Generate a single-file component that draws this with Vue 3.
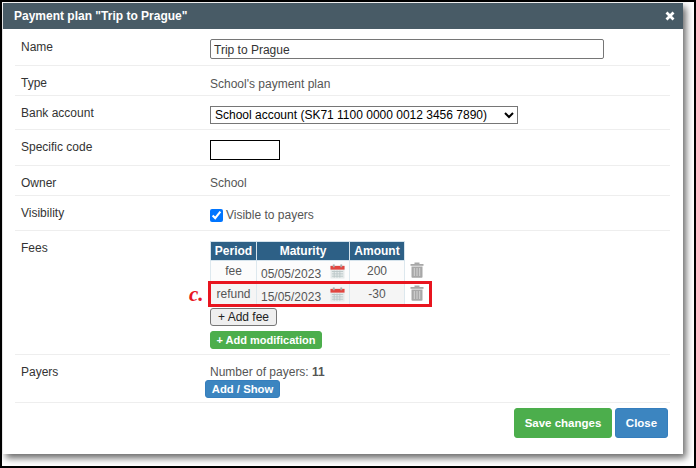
<script setup>
const fees = [
  { period: 'fee', date: '05/05/2023', amount: '200' },
  { period: 'refund', date: '15/05/2023', amount: '-30' }
]
</script>

<template>
  <div class="page">
    <div class="modal">
      <div class="head">
        <span>Payment plan "Trip to Prague"</span>
        <svg class="x" viewBox="0 0 10 10" width="10" height="10"><path d="M1.5 1.5l7 7M8.5 1.5l-7 7" stroke="#fff" stroke-width="2.8" /></svg>
      </div>
      <div class="body">
        <div class="row r1">
          <div class="lab">Name</div>
          <div class="val"><input class="name" value="Trip to Prague" /></div>
        </div>
        <div class="row r2">
          <div class="lab">Type</div>
          <div class="val">School's payment plan</div>
        </div>
        <div class="row r3">
          <div class="lab">Bank account</div>
          <div class="val">
            <select class="bank"><option>School account (SK71 1100 0000 0012 3456 7890)</option></select>
          </div>
        </div>
        <div class="row r4">
          <div class="lab">Specific code</div>
          <div class="val"><div class="code"></div></div>
        </div>
        <div class="row r5">
          <div class="lab">Owner</div>
          <div class="val">School</div>
        </div>
        <div class="row r6">
          <div class="lab">Visibility</div>
          <div class="val chk"><input type="checkbox" checked /><span>Visible to payers</span></div>
        </div>
        <div class="row r7">
          <div class="lab">Fees</div>
          <div class="val">
            <div class="fee-wrap">
              <table class="fees">
                <thead>
                  <tr><th class="c1">Period</th><th class="c2">Maturity</th><th class="c3">Amount</th></tr>
                </thead>
                <tbody>
                  <tr v-for="f in fees" :key="f.date">
                    <td class="c1"><span class="up">{{ f.period }}</span></td>
                    <td class="c2">
                      <div class="dt">
                        <span class="date">{{ f.date }}</span>
                        <svg class="cal" viewBox="0 0 16 16" width="15" height="15">
                          <rect x="0.5" y="2" width="15" height="13.5" fill="#e6ebeb" />
                          <rect x="0.5" y="2" width="15" height="4" fill="#e2453f" />
                          <rect x="3" y="0.5" width="2" height="3" fill="#aaa" />
                          <rect x="11" y="0.5" width="2" height="3" fill="#aaa" />
                          <path d="M2 8h12M2 10.5h12M2 13h12M4.5 7v7.5M7.5 7v7.5M10.5 7v7.5" stroke="#bcc7c9" stroke-width="1" />
                        </svg>
                      </div>
                    </td>
                    <td class="c3"><span class="up">{{ f.amount }}</span></td>
                    <td class="trash">
                      <svg viewBox="0 0 14 16" width="14" height="16">
                        <rect x="0.5" y="2" width="13" height="1.8" fill="#a8a8a8" />
                        <rect x="4.5" y="0.5" width="5" height="2" fill="#a8a8a8" />
                        <path d="M1.5 4.5h11V15a.8.8 0 0 1-.8.8H2.3a.8.8 0 0 1-.8-.8z" fill="#a8a8a8" />
                        <path d="M4.3 6v8M7 6v8M9.7 6v8" stroke="#d4d4d4" stroke-width="1" />
                      </svg>
                    </td>
                  </tr>
                </tbody>
              </table>
              <div class="mark"></div>
              <span class="c-label">c.</span>
            </div>
            <button class="btn-fee">+ Add fee</button>
            <button class="btn-mod">+ Add modification</button>
          </div>
        </div>
        <div class="row r8">
          <div class="lab">Payers</div>
          <div class="val">
            <div class="count">Number of payers: <b>11</b></div>
            <button class="btn-add">Add / Show</button>
          </div>
        </div>
        <div class="foot">
          <button class="btn-save">Save changes</button>
          <button class="btn-close">Close</button>
        </div>
      </div>
    </div>
  </div>
</template>

<style>
html, body { margin: 0; background: #fff; }
</style>

<style scoped>
.page {
  box-sizing: border-box;
  width: 696px;
  height: 468px;
  border: 2px solid #000;
  padding: 1px 0 0 1px;
  background: #fff;
  font-family: "Liberation Sans", Arial, sans-serif;
  font-size: 12px;
  color: #555;
  overflow: hidden;
}
.modal {
  width: 680px;
  height: 451px;
  background: #fff;
  box-shadow: 3px 4px 7px rgba(0, 0, 0, 0.6);
}
.head {
  height: 26px;
  background: #485b66;
  color: #fff;
  font-weight: bold;
  display: flex;
  align-items: center;
  justify-content: space-between;
  padding: 0 8px 0 11px;
}
.body { padding: 0 13px 0 12px; }
.row {
  display: flex;
  border-bottom: 1px solid #eee;
  box-sizing: border-box;
}
.lab { width: 195px; padding-left: 6px; box-sizing: border-box; color: #333; position: relative; top: -1px; }
.r3 .lab, .r4 .lab, .r5 .lab, .r7 .lab, .r8 .lab { top: 0; }
.val { flex: 1; }
.r1 { height: 37px; padding-top: 12px; }
.r2 { height: 30px; padding-top: 11px; }
.r3 { height: 34px; padding-top: 10px; }
.r4 { height: 36px; padding-top: 10px; }
.r5 { height: 30px; padding-top: 10px; }
.r6 { height: 35px; padding-top: 11px; }
.r7 { height: 124px; padding-top: 10px; }
.r8 { height: 48px; padding-top: 10px; }
.name {
  width: 394px;
  height: 20px;
  box-sizing: border-box;
  border: 1px solid #767676;
  border-radius: 2px;
  padding: 2px 3px 0;
  font: 12px "Liberation Sans", Arial, sans-serif;
  color: #333;
  display: block;
  margin-top: -2px;
}
.bank {
  width: 308px;
  height: 18px;
  box-sizing: border-box;
  font: 12px "Liberation Sans", Arial, sans-serif;
  color: #000;
  background: #fff;
  border: 1px solid #767676;
  display: block;
  padding: 0;
}
.code {
  width: 70px;
  height: 20px;
  box-sizing: border-box;
  border: 1px solid #000;
}
.chk { display: flex; align-items: center; height: 14px; margin-top: 1px; }
.chk input { width: 13px; height: 13px; margin: 0 3px 0 0; }
.fee-wrap { position: relative; }
.fees {
  border-collapse: collapse;
  font-size: 12px;
}
.fees th {
  background: #2d6086;
  color: #fff;
  font-weight: bold;
  height: 18px;
  padding: 0;
  border: 1px solid #d5e3ec;
  text-align: center;
}
.fees td {
  padding: 0;
  height: 22px;
  text-align: center;
  border: 1px solid #dde8ee;
}
.fees tbody tr:nth-child(2) td { background: #f5f5f5; }
.fees tbody tr:nth-child(1) td { background: #fcfcfc; }
.fees tbody tr td.trash { border: none; background: #fff; width: 24px; }
.trash svg { position: relative; top: -1px; display: inline-block; }
.up { position: relative; top: -1px; }
.c1 { width: 45px; }
.c2 { width: 92px; }
.c3 { width: 54px; }
.dt { display: flex; align-items: center; justify-content: space-between; padding: 3px 4px 0 4px; }
.cal { margin-top: -4px; }
.mark {
  position: absolute;
  left: -2px;
  top: 40px;
  width: 224px;
  height: 26px;
  box-sizing: border-box;
  border: 3px solid #e8151f;
}
.c-label {
  position: absolute;
  left: -21px;
  top: 41px;
  font: italic bold 21px "Liberation Serif", serif;
  color: #e8151f;
}
button {
  font-family: "Liberation Sans", Arial, sans-serif;
  font-size: 12px;
  box-sizing: border-box;
  display: block;
  cursor: pointer;
}
.btn-fee {
  width: 67px;
  height: 18px;
  padding: 0;
  margin-top: 1px;
  background: #efefef;
  color: #222;
  border: 1px solid #767676;
  border-radius: 3px;
}
.btn-mod {
  width: 112px;
  height: 18px;
  padding: 0;
  margin-top: 5px;
  background: #4cae4c;
  color: #fff;
  border: 1px solid #4cae4c;
  border-radius: 3px;
  font-weight: bold;
  font-size: 11px;
}
.count { line-height: 14px; }
.btn-add {
  width: 75px;
  height: 18px;
  padding: 0;
  margin: 1px 0 0 -5px;
  background: #3c85c0;
  border: 1px solid #357ebd;
  border-radius: 3px;
  color: #fff;
  font-weight: bold;
  font-size: 11.3px;
}
.foot {
  display: flex;
  justify-content: flex-end;
  gap: 3px;
  padding: 5px 2px 0 0;
}
.btn-save, .btn-close {
  height: 30px;
  padding: 0;
  border-radius: 3px;
  color: #fff;
  font-weight: bold;
  font-size: 11.5px;
}
.btn-save { width: 98px; background: #4cae4c; border: 1px solid #4cae4c; }
.btn-close { width: 53px; background: #3c85c0; border: 1px solid #357ebd; }
</style>
